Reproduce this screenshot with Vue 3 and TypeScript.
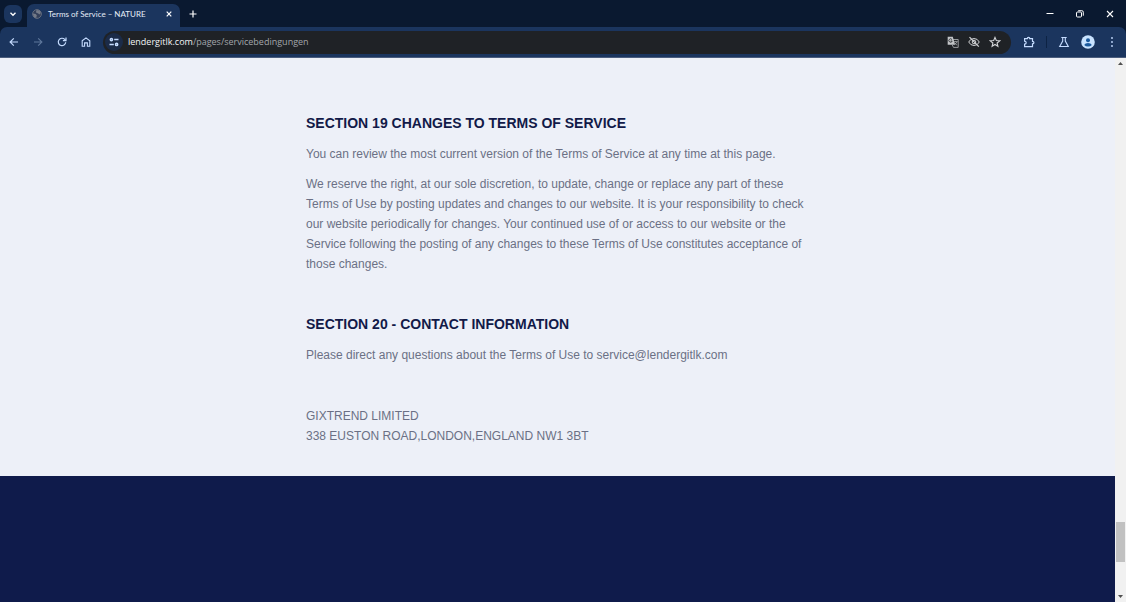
<script setup lang="ts">
import { ref } from 'vue'

interface Section {
  title: string
  paragraphs: string[][]
}

const address = ref('lendergitlk.com/pages/servicebedingungen')

const sections: Section[] = [
  {
    title: 'SECTION 19 CHANGES TO TERMS OF SERVICE',
    paragraphs: [
      ['You can review the most current version of the Terms of Service at any time at this page.'],
      [
        'We reserve the right, at our sole discretion, to update, change or replace any part of these Terms of Use by posting updates and changes to our website. It is your responsibility to check our website periodically for changes. Your continued use of or access to our website or the Service following the posting of any changes to these Terms of Use constitutes acceptance of those changes.',
      ],
    ],
  },
  {
    title: 'SECTION 20 - CONTACT INFORMATION',
    paragraphs: [
      ['Please direct any questions about the Terms of Use to service@lendergitlk.com'],
      ['GIXTREND LIMITED', '338 EUSTON ROAD,LONDON,ENGLAND NW1 3BT'],
    ],
  },
]
</script>

<template>
  <div class="window">
    <header class="chrome">
      <div class="tabstrip">
        <button class="tab-search" aria-label="Search tabs">
          <svg width="8" height="8" viewBox="0 0 8 8"><path d="M1.5 2.8 4 5.2 6.5 2.8" fill="none" stroke="#fff" stroke-width="1.4" /></svg>
        </button>
        <div class="tab">
          <svg class="favicon" width="10" height="10" viewBox="0 0 10 10">
            <circle cx="5" cy="5" r="4.4" fill="#34405a" stroke="#636c7e" />
            <path d="M1 4.5 3.6 5l1.2 1.3-.6 2.8C2.200 8.700 1 7.200 1 4.500ZM4.600 1l3 .6 1.300 2.400-1.600 1.500L6 4.200l-1.500-.1L4 2.700Z" fill="#747b89" />
          </svg>
          <span class="tab-title">Terms of Service – NATURE</span>
          <button class="bare" aria-label="Close tab">
            <svg width="8" height="8" viewBox="0 0 8 8"><path d="m1.700 1.700 4.600 4.600m0-4.600L1.700 6.300" stroke="#fff" stroke-width="1.200" /></svg>
          </button>
        </div>
        <button class="bare new-tab" aria-label="New tab">
          <svg width="8" height="8" viewBox="0 0 8 8"><path d="M4 .5v7M.5 4h7" stroke="#fff" stroke-width="1.200" /></svg>
        </button>
        <div class="controls">
          <button class="bare" aria-label="Minimize"><svg width="10" height="10" viewBox="0 0 10 10"><path d="M1.500 4.500h7" stroke="#fff" /></svg></button>
          <button class="bare" aria-label="Restore">
            <svg width="10" height="10" viewBox="0 0 10 10" fill="none" stroke="#fff"><rect x="1.500" y="3" width="5" height="5" rx="1" /><path d="M3.200 1.700h3.600q1.500 0 1.500 1.500v3.500" /></svg>
          </button>
          <button class="bare" aria-label="Close"><svg width="10" height="10" viewBox="0 0 10 10"><path d="m2 2 6 6m0-6L2 8" stroke="#fff" stroke-width="1.100" /></svg></button>
        </div>
      </div>

      <div class="toolbar">
        <nav class="nav">
          <button class="bare" aria-label="Back"><svg width="12" height="12" viewBox="0 0 12 12" fill="none" stroke="#c5dcff" stroke-width="1.200"><path d="M10 6H2.300M5.800 2.300 2.100 6l3.700 3.700" /></svg></button>
          <button class="bare" aria-label="Forward" disabled><svg width="12" height="12" viewBox="0 0 12 12" fill="none" stroke="#5f789c" stroke-width="1.100"><path d="M2 6h7.700M6.200 2.300 9.900 6 6.200 9.700" /></svg></button>
          <button class="bare" aria-label="Reload">
            <svg width="12" height="12" viewBox="0 0 12 12" fill="none" stroke="#c5dcff" stroke-width="1.200"><path d="M9.700 6.200A3.700 3.700 0 1 1 8.700 3.400L9.800 4.500" /><path d="M10 1.600v3.100H6.900" /></svg>
          </button>
          <button class="bare" aria-label="Home">
            <svg width="12" height="12" viewBox="0 0 12 12" fill="none" stroke="#c5dcff" stroke-width="1.100"><path d="M2.200 4.800 6 1.900l3.800 2.900v5.500H7.400V6.900H4.600v3.400H2.200Z" /></svg>
          </button>
        </nav>
        <div class="omnibox">
          <button class="site-info" aria-label="View site information">
            <svg width="10" height="10" viewBox="0 0 10 10" fill="none" stroke="#c5dcff" stroke-width="1.500"><circle cx="2.400" cy="2.600" r="1.100" /><path d="M5.200 2.600h4.300M.5 7.400h4.300" /><circle cx="7.600" cy="7.400" r="1.100" /></svg>
          </button>
          <label class="address">
            <span class="url" aria-hidden="true"><b>lendergitlk.com</b>/pages/servicebedingungen</span>
            <input v-model="address" type="text" aria-label="Address" spellcheck="false" />
          </label>
          <button class="bare" aria-label="Translate this page">
            <svg width="12" height="12" viewBox="0 0 12 12"><path d="M4.500 3.500h6.700v7.900H6.500L5.300 9" fill="none" stroke="#b5b7ba" stroke-width=".8" /><path d="M.7.700h5.100l2.300 8H.7Z" fill="#c3c5c8" /><path d="M5 3.600a1.700 1.700 0 1 0 .2 1.400H3.700" fill="none" stroke="#202327" stroke-width=".8" /><path d="M6.900 5.600h3.700M8.700 4.900v.7M10 5.700q-.5 1.700-2.300 2.900M7.600 6.600q.9 1.600 2.500 2.500" fill="none" stroke="#b5b7ba" stroke-width=".7" /></svg>
          </button>
          <button class="bare" aria-label="Third-party cookies blocked">
            <svg width="12" height="12" viewBox="0 0 12 12" fill="none" stroke="#d2d4d7"><path d="M.7 6Q2.500 2.500 6 2.500T11.300 6Q9.500 9.500 6 9.500T.7 6Z" /><circle cx="6" cy="6" r="1.800" /><path d="m1.500 1.200 9.300 9.500" stroke-width="1.200" /></svg>
          </button>
          <button class="bare" aria-label="Bookmark this tab">
            <svg width="12" height="12" viewBox="0 0 12 12" fill="none" stroke="#d2d4d7" stroke-width="1.100"><path d="m6 1.400 1.300 3.100 3.400.3-2.600 2.200.8 3.300L6 8.500l-2.900 1.800.8-3.300L1.300 4.800l3.400-.3Z" /></svg>
          </button>
        </div>
        <div class="actions">
          <button class="bare" aria-label="Extensions">
            <svg width="12" height="12" viewBox="0 0 12 12" fill="none" stroke="#c5dcff" stroke-width="1.200"><path d="M1.600 2.700H4.300Q4.300 1.300 5.500 1.300T6.700 2.700h2.800v2.700q1.400 0 1.400 1.200T9.500 7.800v2.900H1.600V8.200Q3.200 8 3.200 6.700T1.600 5.200Z" /></svg>
          </button>
          <span class="divider"></span>
          <button class="bare" aria-label="Experiments">
            <svg width="12" height="12" viewBox="0 0 12 12" fill="none" stroke="#c5dcff" stroke-width="1.100"><path d="M3.300 1.500h5.400M4.700 1.500v3.600L1.700 10.500h8.600L7.300 5.100V1.500" /></svg>
          </button>
          <button class="bare" aria-label="Profile">
            <svg width="14" height="14" viewBox="0 0 14 14"><circle cx="7" cy="7" r="6.800" fill="#c9e3ff" /><circle cx="7" cy="5.200" r="2" fill="#1b5a9d" /><path d="M3.200 9.900Q4.200 8 7 8t3.800 1.900Q9.300 11.400 7 11.400T3.200 9.900Z" fill="#1b5a9d" /></svg>
          </button>
          <button class="bare" aria-label="Menu">
            <svg width="12" height="12" viewBox="0 0 12 12" fill="#c5dcff"><circle cx="6" cy="2" r=".9" /><circle cx="6" cy="6" r=".9" /><circle cx="6" cy="10" r=".9" /></svg>
          </button>
        </div>
      </div>
    </header>

    <div class="viewport">
      <div class="page">
        <main class="terms">
          <section v-for="section in sections" :key="section.title">
            <h2>{{ section.title }}</h2>
            <p v-for="(lines, i) in section.paragraphs" :key="i">
              <template v-for="(line, n) in lines" :key="n"><br v-if="n > 0" />{{ line }}</template>
            </p>
          </section>
        </main>
        <footer class="footer"></footer>
      </div>
      <div class="scrollbar" aria-hidden="true">
        <svg width="5" height="3" viewBox="0 0 5 3"><path d="M0 3 2.500 0 5 3Z" fill="#505050" /></svg>
        <div class="track">
          <div class="thumb"></div>
        </div>
        <svg width="5" height="3" viewBox="0 0 5 3"><path d="M0 0 2.500 3 5 0Z" fill="#505050" /></svg>
      </div>
    </div>
  </div>
</template>

<style>
body {
  margin: 0;
}
</style>

<style scoped>
.window {
  display: flex;
  flex-direction: column;
  min-height: 100vh;
  font-family: 'Open Sans', 'Noto Sans', sans-serif;
}

svg {
  display: block;
  flex: none;
}

button {
  display: grid;
  place-items: center;
  flex: none;
  padding: 0;
  border: 0;
  background: none;
}

.bare {
  width: 16px;
  height: 16px;
}

.chrome {
  background: #0a1930;
}

.tabstrip {
  display: flex;
  align-items: center;
  height: 27px;
  padding: 0 8px 0 4px;
}

.tab-search {
  width: 18px;
  height: 18px;
  border-radius: 6px;
  background: #1b355e;
}

.tab {
  display: flex;
  align-items: center;
  gap: 6px;
  align-self: flex-end;
  box-sizing: border-box;
  width: 153px;
  height: 23px;
  margin-left: 5px;
  padding: 0 3px 3px 5px;
  border-radius: 7px 7px 0 0;
  background: #1b355e;
}

.tab-title {
  flex: 1;
  color: #e6edf8;
  font-family: Lato, sans-serif;
  font-size: 8px;
  line-height: 16px;
  white-space: nowrap;
}

.new-tab {
  margin-left: 5px;
}

.controls {
  display: flex;
  gap: 14px;
  margin-left: auto;
}

.toolbar {
  display: flex;
  align-items: center;
  height: 30px;
  padding: 0 6px;
  border-bottom: 1px solid #4b5d7d;
  border-radius: 7px 7px 0 0;
  background: #1b355e;
}

.nav {
  display: flex;
  gap: 8px;
}

.omnibox {
  display: flex;
  flex: 1;
  align-items: center;
  gap: 5px;
  height: 23px;
  margin: 0 10px 0 9px;
  padding: 0 8px 0 2px;
  border-radius: 12px;
  background: #1f2226;
}

.site-info {
  width: 18px;
  height: 18px;
  border-radius: 50%;
  background: #1b2b48;
}

.address {
  display: grid;
  flex: 1;
  align-items: center;
  font-size: 9px;
  line-height: 16px;
}

.address > * {
  grid-area: 1 / 1;
}

.url {
  color: #a3a6ab;
  white-space: nowrap;
}

.url b {
  color: #f2f3f5;
  font-weight: 400;
}

.address input {
  width: 100%;
  box-sizing: border-box;
  padding: 0;
  border: 0;
  outline: 0;
  background: none;
  color: transparent;
  font: inherit;
}

.actions {
  display: flex;
  align-items: center;
  gap: 8px;
}

.divider {
  width: 1px;
  height: 12px;
  margin: 0 1px;
  background: #0d2344;
}

.viewport {
  display: flex;
  flex: 1;
}

.page {
  display: flex;
  flex: 1;
  flex-direction: column;
  background: #edf0f8;
}

.terms {
  width: 100%;
  max-width: 503px;
  box-sizing: border-box;
  margin: 0 auto;
  padding: 55px 0 30px;
}

section + section {
  margin-top: 40px;
}

h2 {
  margin: 0;
  color: #121a48;
  font: 700 14px/20px 'Liberation Sans', Arial, sans-serif;
}

p {
  margin: 10px 0 0;
  color: #6b7085;
  font: 400 12px/20px 'Liberation Sans', Arial, sans-serif;
}

h2 + p {
  margin-top: 11px;
}

section:last-child p + p {
  margin-top: 41px;
}

.footer {
  flex: 1;
  background: #0f1b4b;
}

.scrollbar {
  display: flex;
  flex-direction: column;
  align-items: center;
  gap: 4px;
  width: 11px;
  box-sizing: border-box;
  padding: 4px 0;
  background: #f1f1f1;
}

.track {
  display: flex;
  flex: 1;
  flex-direction: column;
  justify-content: flex-end;
  box-sizing: border-box;
  width: 9px;
  padding-bottom: 29px;
}

.thumb {
  height: 40px;
  background: #c1c1c1;
}
</style>
